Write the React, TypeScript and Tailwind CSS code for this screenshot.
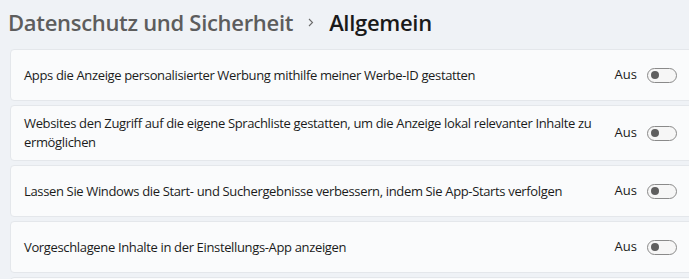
import React from 'react';

const items = [
  'Apps die Anzeige personalisierter Werbung mithilfe meiner Werbe-ID gestatten',
  'Websites den Zugriff auf die eigene Sprachliste gestatten, um die Anzeige lokal relevanter Inhalte zu ermöglichen',
  'Lassen Sie Windows die Start- und Suchergebnisse verbessern, indem Sie App-Starts verfolgen',
  'Vorgeschlagene Inhalte in der Einstellungs-App anzeigen',
];

function Toggle() {
  return (
    <div className="w-[30px] h-[15px] rounded-full border border-[#8a8a8a] bg-[#f6f6f6] flex items-center pl-[3px] shrink-0">
      <div className="w-[8px] h-[8px] rounded-full bg-[#5e5e5e]" />
    </div>
  );
}

export default function App() {
  return (
    <div
      className="w-[689px] h-[279px] overflow-hidden bg-[#eff2f6] text-[#1b1b1b]"
      style={{ fontFamily: '"Open Sans", "Noto Sans", sans-serif' }}
    >
      {/* Breadcrumb header */}
      <div className="flex items-center pl-[8px] h-[42px] pt-[1px]">
        <h1 className="text-[22px] font-semibold tracking-[-0.3px] text-[#5d5d5d] leading-none">
          Datenschutz und Sicherheit
        </h1>
        <svg width="6" height="9" viewBox="0 0 6 9" className="mx-[15px] mt-[1px]">
          <path d="M1 1 L4.5 4.5 L1 8" fill="none" stroke="#6b6b6b" strokeWidth="1.1" />
        </svg>
        <h2 className="text-[22px] font-semibold tracking-[-0.3px] text-[#1a1a1a] leading-none">Allgemein</h2>
      </div>

      {/* Settings cards */}
      <div className="ml-[10px] w-[692px] mt-[7px] flex flex-col gap-[4px]">
        {items.map((label, i) => (
          <div
            key={i}
            className="min-h-[52px] py-[8px] pl-[13px] pr-[24px] flex items-center bg-[#fafbfc] border border-[#e4e7eb] rounded-[4px]"
          >
            <p className="flex-1 pr-[10px] text-[13px] leading-[19px] tracking-[-0.35px] text-[#1b1b1b]">{label}</p>
            <span className="text-[13px] text-[#1b1b1b] mr-[10px] ml-[4px]">Aus</span>
            <Toggle />
          </div>
        ))}
        {/* next card, only its top edge is in view */}
        <div className="h-[52px] bg-[#fafbfc] border border-[#e4e7eb] rounded-[4px]" />
      </div>
    </div>
  );
}
